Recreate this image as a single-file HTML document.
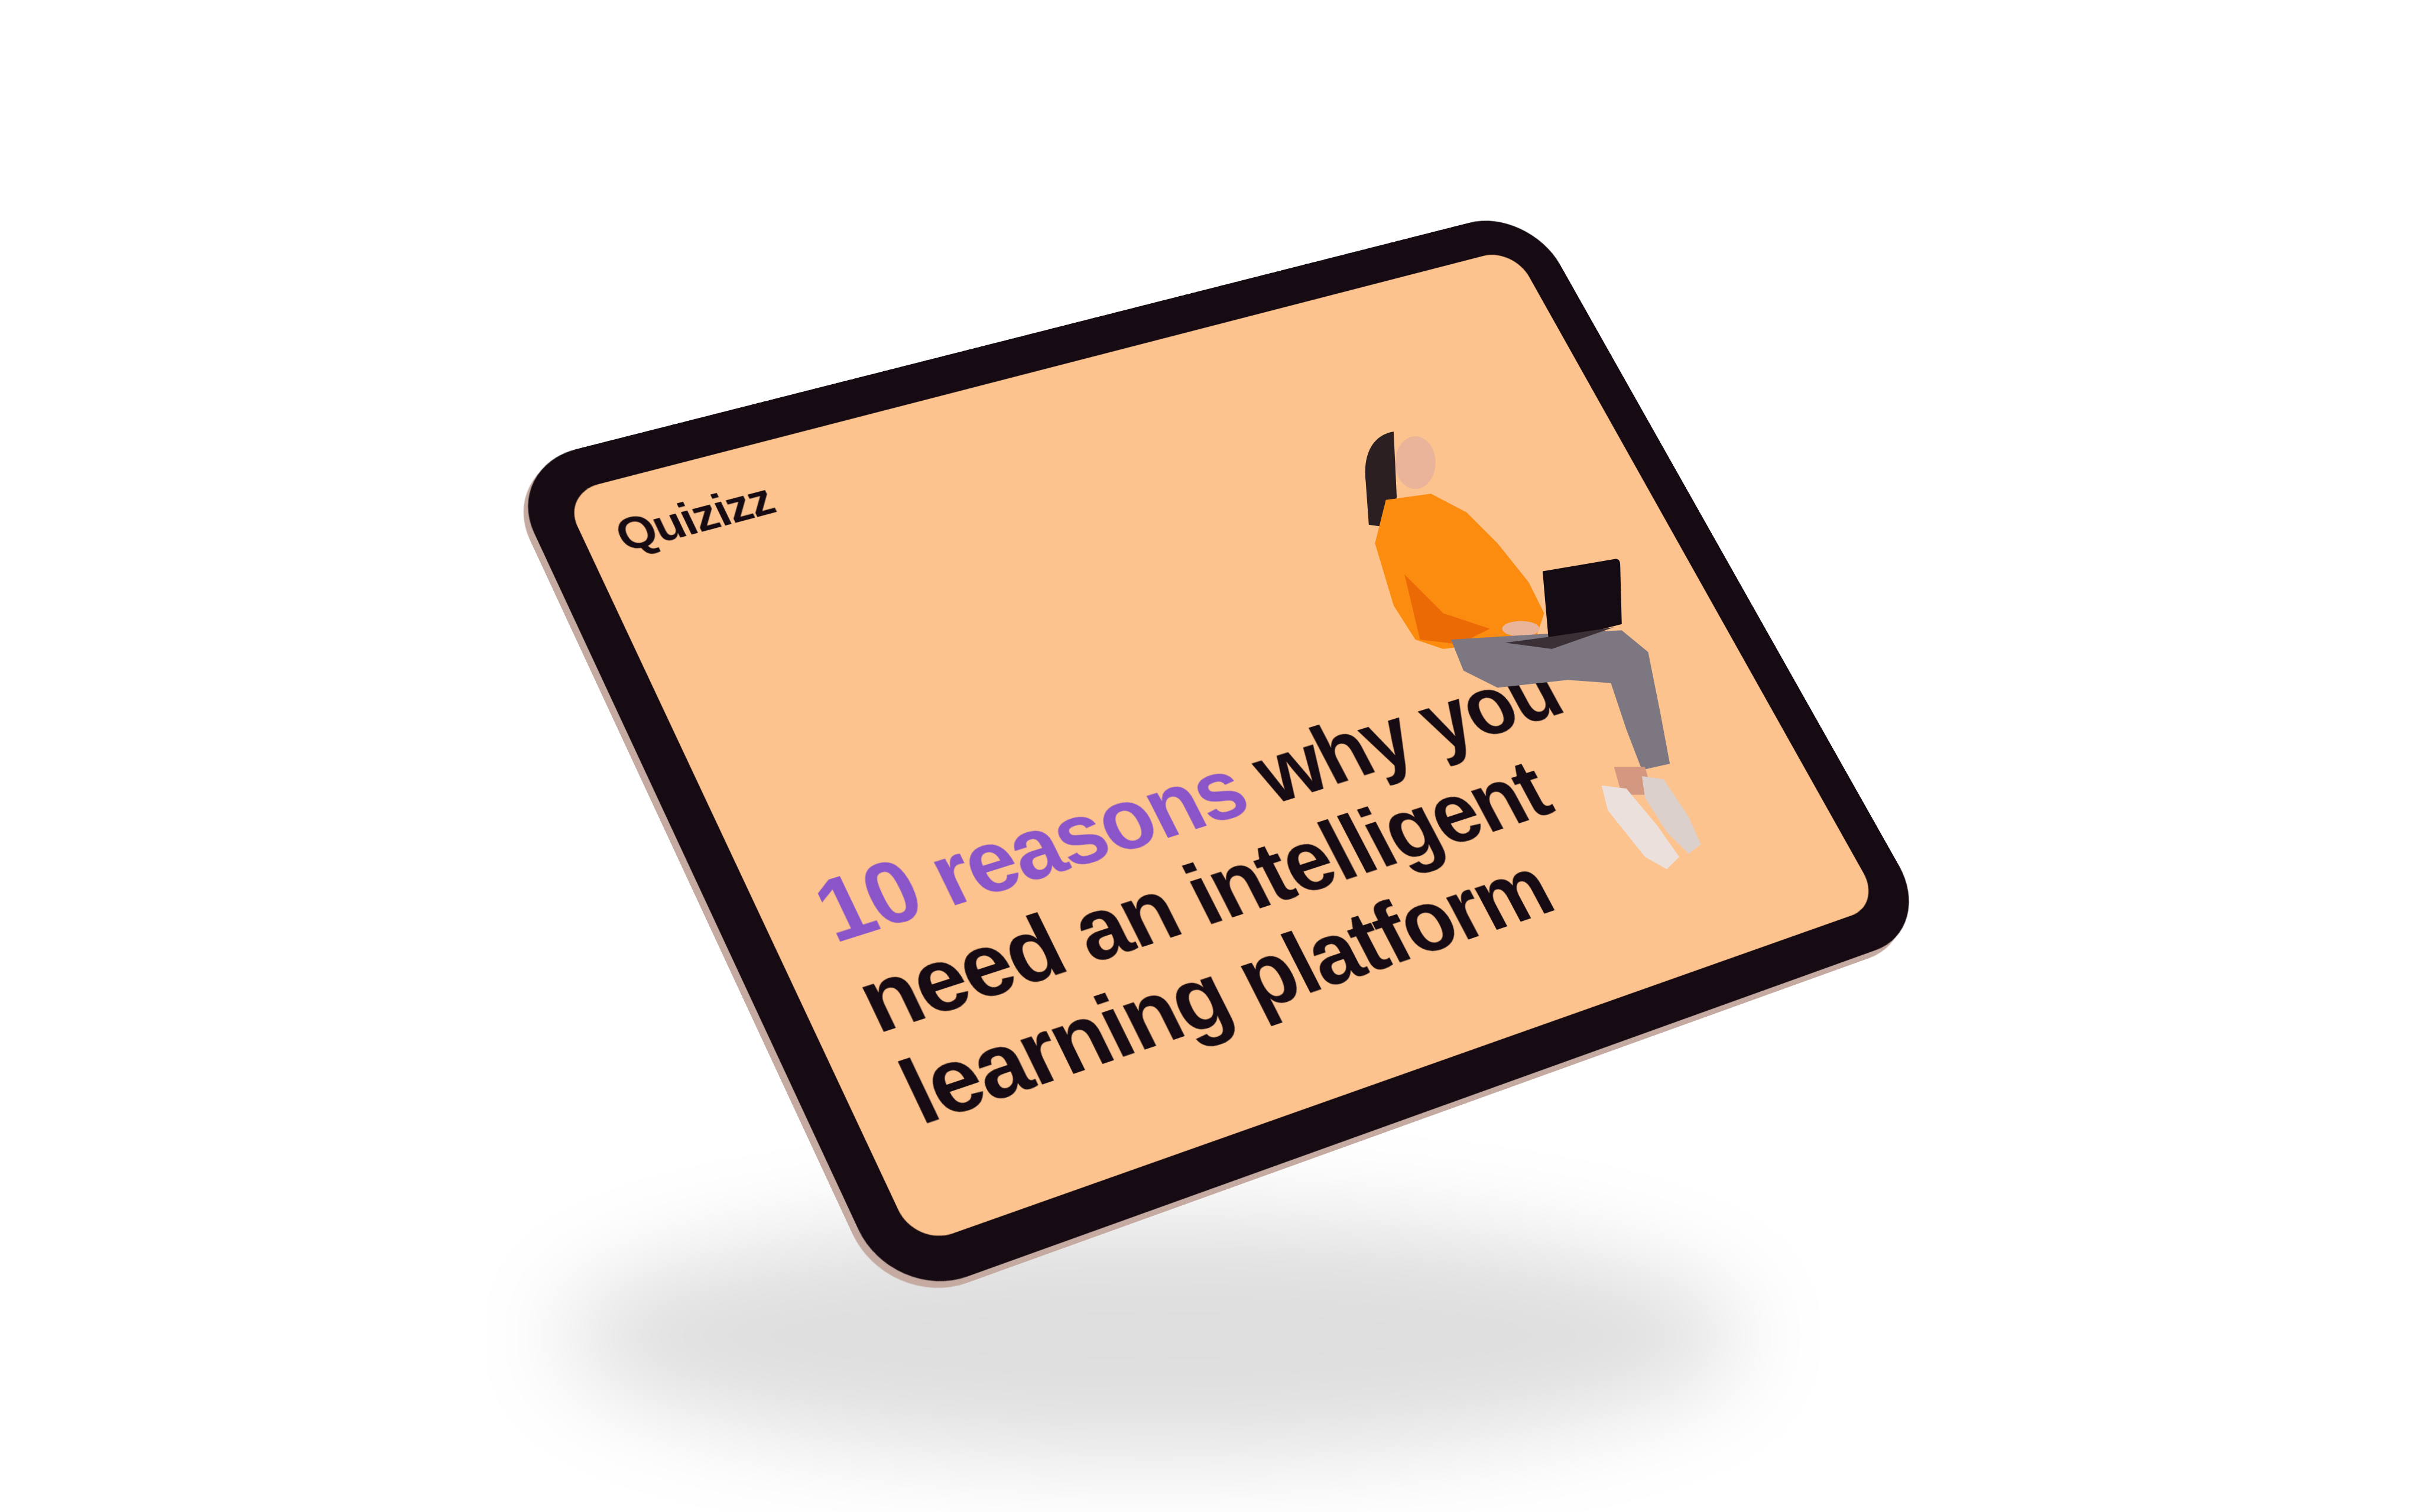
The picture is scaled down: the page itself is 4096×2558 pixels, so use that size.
<!DOCTYPE html>
<html><head><meta charset="utf-8"><style>
html,body{margin:0;padding:0;background:#fff;}
body{width:4096px;height:2558px;position:relative;overflow:hidden;}
.shadow{position:absolute;left:950px;top:2060px;width:2000px;height:400px;border-radius:50%;background:rgba(0,0,0,0.13);filter:blur(80px);}
.plane{position:absolute;left:0;top:0;width:1600px;height:1200px;transform-origin:0 0;
transform:matrix3d(1.1909,-0.2290,0,0.00007237, 0.42158,0.95717,0,-0.00004954, 0,0,1,0, 951,835,0,1);}
.edge{position:absolute;left:-72px;top:-58px;width:1722px;height:1328px;border-radius:115px;background:#c4aaa0;}
.bezel{position:absolute;left:-62px;top:-62px;width:1724px;height:1324px;border-radius:110px;background:#160b12;}
.screen{position:absolute;left:0;top:0;width:1600px;height:1200px;border-radius:55px;background:#fdc38e;overflow:hidden;}
.logo{position:absolute;left:48px;top:48px;font:700 72px "Liberation Sans",sans-serif;color:#160b12;letter-spacing:-2px;}
.h{position:absolute;left:80px;font:700 132px/1 "Liberation Sans",sans-serif;color:#160b12;letter-spacing:-3px;white-space:nowrap;}
.p{color:#8a55c8;}
</style></head><body>
<div class="shadow"></div>
<div class="plane">
  <div class="edge"></div>
  <div class="bezel"></div>
  <div class="screen">
    <div class="logo">Quizizz</div>
    <div class="h" style="top:650px"><span class="p">10 reasons</span> why you</div>
    <div class="h" style="top:792px">need an intelligent</div>
    <div class="h" style="top:934px">learning platform</div>
  </div>
</div>
<svg style="position:absolute;left:0;top:0" width="4096" height="2558" viewBox="0 0 1560 974">
  <path d="M898,278 C885,280 878,292 880,310 L882,338 L896,340 L900,320 Z" fill="#2b1f22"/>
  <ellipse cx="912" cy="298" rx="13" ry="17" fill="#e9b49a"/>
  <path d="M893,322 L922,318 L945,330 L965,350 L985,375 L995,395 L990,410 L960,414 L930,418 L912,412 L898,390 L886,350 Z" fill="#fb8c10"/>
  <path d="M905,370 L930,395 L960,405 L940,415 L915,412 Z" fill="#ec6a06"/>
  <ellipse cx="980" cy="405" rx="12" ry="5" fill="#e9b49a"/>
  <path d="M935,412 L1000,408 L1045,406 L1062,420 L1070,460 L1076,492 L1058,496 L1048,470 L1038,440 L1010,438 L965,443 L943,432 Z" fill="#7d7782"/>
  <path d="M994,368 L1041,360 Q1044,360 1044,364 L1045,402 L998,414 Z" fill="#150b12"/>
  <path d="M970,414 L1000,410 L1040,404 L1000,418 Z" fill="#3a3036"/>
  <path d="M1040,494 L1060,494 L1065,512 L1045,512 Z" fill="#d49880"/>
  <path d="M1032,506 L1048,508 L1068,532 L1082,552 L1074,560 L1060,552 L1036,522 Z" fill="#ebe0dc"/>
  <path d="M1058,500 L1072,502 L1088,526 L1096,544 L1088,550 L1074,536 L1060,514 Z" fill="#dcd0cc"/>
</svg>
</body></html>
